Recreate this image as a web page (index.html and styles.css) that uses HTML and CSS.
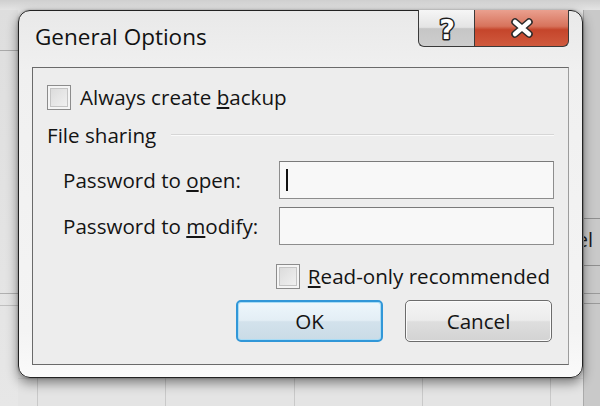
FILE: index.html
```html
<!DOCTYPE html>
<html>
<head>
<meta charset="utf-8">
<link rel="stylesheet" href="styles.css">
</head>
<body>
<div class="stage">
  <div class="left-strip"></div>
  <div class="dialog">
    <div class="titlebar">
      <div class="title">General Options</div>
      <div class="caption-buttons">
        <div class="cap-btn help">
          <svg width="28" height="34" viewBox="0 0 28 34"><text x="14" y="28" text-anchor="middle" class="help-glyph">?</text></svg>
        </div>
        <div class="cap-btn close">
          <svg width="30" height="22" viewBox="0 0 30 22"><path d="M8 5 L22 17 M22 5 L8 17" class="x-outline"/><path d="M8 5 L22 17 M22 5 L8 17" class="x-fill"/></svg>
        </div>
      </div>
    </div>
    <div class="panel">
      <div class="check-row first">
        <span class="checkbox"></span>
        <span class="label">Always create <u>b</u>ackup</span>
      </div>
      <div class="group-row">
        <span class="label">File sharing</span>
        <span class="sep"></span>
      </div>
      <div class="field-row r1">
        <span class="label">Password to <u>o</u>pen:</span>
        <div class="input"><span class="caret"></span></div>
      </div>
      <div class="field-row r2">
        <span class="label">Password to <u>m</u>odify:</span>
        <div class="input"></div>
      </div>
      <div class="check-row ro">
        <span class="checkbox"></span>
        <span class="label"><u>R</u>ead-only recommended</span>
      </div>
      <div class="button-row">
        <div class="btn ok">OK</div>
        <div class="btn">Cancel</div>
      </div>
    </div>
  </div>
  <div class="right-strip"><span class="behind-text">Cancel</span></div>
</div>
</body>
</html>
```
FILE: styles.css
```css
* { box-sizing: border-box; }
html, body { margin: 0; padding: 0; }
body {
  width: 600px;
  height: 406px;
  overflow: hidden;
  font-family: "Open Sans", "Noto Sans", sans-serif;
  color: #141414;
}
.stage {
  width: 600px;
  height: 406px;
  display: flex;
  align-items: flex-start;
  padding-top: 10px;
  background-color: #e9e9e9;
  background-image:
    linear-gradient(#dadada, #dadada),
    linear-gradient(to bottom, #cfcfcf 0, #e4e4e4 10px, #e4e4e4 100%);
  background-size: 600px 1px, 600px 406px;
  background-position: 0 378px, 0 0;
  background-repeat: no-repeat;
  position: relative;
}
.stage::after {
  content: "";
  position: absolute;
  left: 0; right: 0; top: 378px; bottom: 0;
  background-image:
    linear-gradient(to right, transparent 37px, #c9c9c9 37px, #c9c9c9 38px, transparent 38px,
      transparent 165px, #c9c9c9 165px, #c9c9c9 166px, transparent 166px,
      transparent 294px, #c9c9c9 294px, #c9c9c9 295px, transparent 295px,
      transparent 422px, #c9c9c9 422px, #c9c9c9 423px, transparent 423px,
      transparent 550px, #c9c9c9 550px, #c9c9c9 551px, transparent 551px);
  z-index: 0;
}
.left-strip {
  width: 18px;
  flex: none;
  height: 396px;
  background-image:
    linear-gradient(#a9a9a9, #a9a9a9),
    linear-gradient(#b0b0b0, #b0b0b0),
    linear-gradient(#c0c0c0, #c0c0c0),
    linear-gradient(to bottom, #dedede, #e7e7e7);
  background-size: 18px 1px, 18px 1px, 18px 1px, 18px 100%;
  background-position: 0 40px, 0 283px, 0 295px, 0 0;
  background-repeat: no-repeat;
}
.right-strip {
  width: 17px;
  flex: none;
  height: 396px;
  overflow: hidden;
  display: flex;
  justify-content: flex-end;
  padding-top: 218px;
  background-color: #c9c9c9;
  background-image:
    linear-gradient(#8f8f8f, #8f8f8f),
    linear-gradient(#8f8f8f, #8f8f8f),
    linear-gradient(#9a9a9a, #9a9a9a),
    linear-gradient(#9a9a9a, #9a9a9a);
  background-size: 17px 1px, 17px 1px, 17px 1px, 17px 1px;
  background-position: 0 208px, 0 255px, 0 283px, 0 293px;
  background-repeat: no-repeat;
  border-left: 1px solid #aaaaaa;
}
.behind-text {
  font-size: 20px;
  line-height: 24px;
  color: #1a1a1a;
  white-space: nowrap;
  margin-right: 7px;
}
.dialog {
  width: 565px;
  height: 368px;
  flex: none;
  border: 1px solid #222;
  border-radius: 12px;
  background: linear-gradient(to bottom, #e9e9e9 0, #f0f0f0 60px, #f4f4f4 320px, #fafafa 100%);
  box-shadow: 0 5px 12px rgba(0,0,0,0.45), 0 0 3px rgba(0,0,0,0.3);
  padding: 0 13px 12px 13px;
  display: flex;
  flex-direction: column;
  position: relative;
  z-index: 1;
}
.titlebar {
  height: 56px;
  display: flex;
  align-items: flex-start;
  justify-content: space-between;
}
.title {
  font-size: 22.5px;
  padding-left: 3px;
  padding-top: 11px;
  line-height: 30px;
  color: #111;
}
.caption-buttons {
  display: flex;
  margin-top: -1px;
}
.cap-btn {
  height: 37px;
  border: 1px solid #3a3a3a;
  border-top: none;
  display: flex;
  align-items: center;
  justify-content: center;
}
.cap-btn svg { overflow: visible; }
.help {
  width: 56px;
  border-radius: 0 0 0 6px;
  border-right: none;
  background: linear-gradient(to bottom, #f6f6f6 0, #e4e4e4 48%, #c6c6c6 52%, #cdcdcd 100%);
}
.close {
  width: 95px;
  border-radius: 0 0 6px 0;
  background: linear-gradient(to bottom, #eaa08f 0, #d7735c 45%, #c5452b 55%, #d05a3e 100%);
}
.help-glyph {
  font-family: "DejaVu Sans", sans-serif;
  font-weight: bold;
  font-size: 27px;
  fill: #fff;
  stroke: #1e1e1e;
  stroke-width: 3px;
  stroke-linejoin: round;
  paint-order: stroke;
}
.x-outline { stroke: #2a2a2a; stroke-width: 7.5; stroke-linecap: round; fill: none; }
.x-fill { stroke: #fff; stroke-width: 4.5; stroke-linecap: round; fill: none; }

.panel {
  flex: 1;
  border: 1px solid #6a6a6a;
  border-right-color: #9c9c9c;
  background: #ededed;
  padding: 0 13px 0 14px;
  display: flex;
  flex-direction: column;
  font-size: 20.6px;
}
.label { white-space: nowrap; line-height: 24px; }
.check-row {
  display: flex;
  align-items: center;
  height: 26px;
}
.check-row.first { margin-top: 16px; }
.checkbox {
  width: 24px;
  height: 25px;
  flex: none;
  border: 1px solid #8c8c8c;
  background: linear-gradient(135deg, #d8d8d8, #f4f4f4);
  box-shadow: inset 0 0 0 2px #f5f5f5, inset 0 0 0 3px #c4c4c4;
  margin-right: 9px;
}
.group-row {
  display: flex;
  align-items: center;
  margin-top: 12px;
  height: 26px;
}
.group-row .sep {
  flex: 1;
  height: 2px;
  margin-left: 15px;
  margin-right: 1px;
  border-top: 1px solid #d6d6d6;
  border-bottom: 1px solid #fafafa;
}
.field-row {
  display: flex;
  align-items: center;
  justify-content: space-between;
  padding-left: 16px;
  padding-right: 1px;
  height: 38px;
}
.field-row.r1 { margin-top: 13px; }
.field-row.r2 { margin-top: 8px; }
.input {
  width: 275px;
  height: 38px;
  border: 1px solid #8d8d8d;
  border-top-color: #7a7a7a;
  background: #f8f8f8;
  display: flex;
  align-items: center;
  padding-left: 6px;
}
.caret {
  width: 2px;
  height: 22px;
  background: #111;
}
.check-row.ro {
  margin-top: 18px;
  justify-content: flex-end;
  padding-right: 5px;
}
.check-row.ro .checkbox { margin-right: 8px; }
.button-row {
  display: flex;
  justify-content: flex-end;
  gap: 22px;
  margin-top: 11px;
  padding-right: 3px;
}
.btn {
  width: 147px;
  height: 42px;
  border: 1px solid #6c6c6c;
  border-radius: 5px;
  background: linear-gradient(to bottom, #f4f4f4 0, #ececec 48%, #dedede 52%, #d3d3d3 100%);
  box-shadow: inset 0 0 0 1px #fbfbfb;
  display: flex;
  align-items: center;
  justify-content: center;
  font-size: 20.6px;
}
.btn.ok {
  border: 2px solid #3197d8;
  box-shadow: inset 0 0 0 1px #a9dcf5;
  background: linear-gradient(to bottom, #eef7fc 0, #e3eef5 48%, #d3e2ec 52%, #cadbe6 100%);
}
```
